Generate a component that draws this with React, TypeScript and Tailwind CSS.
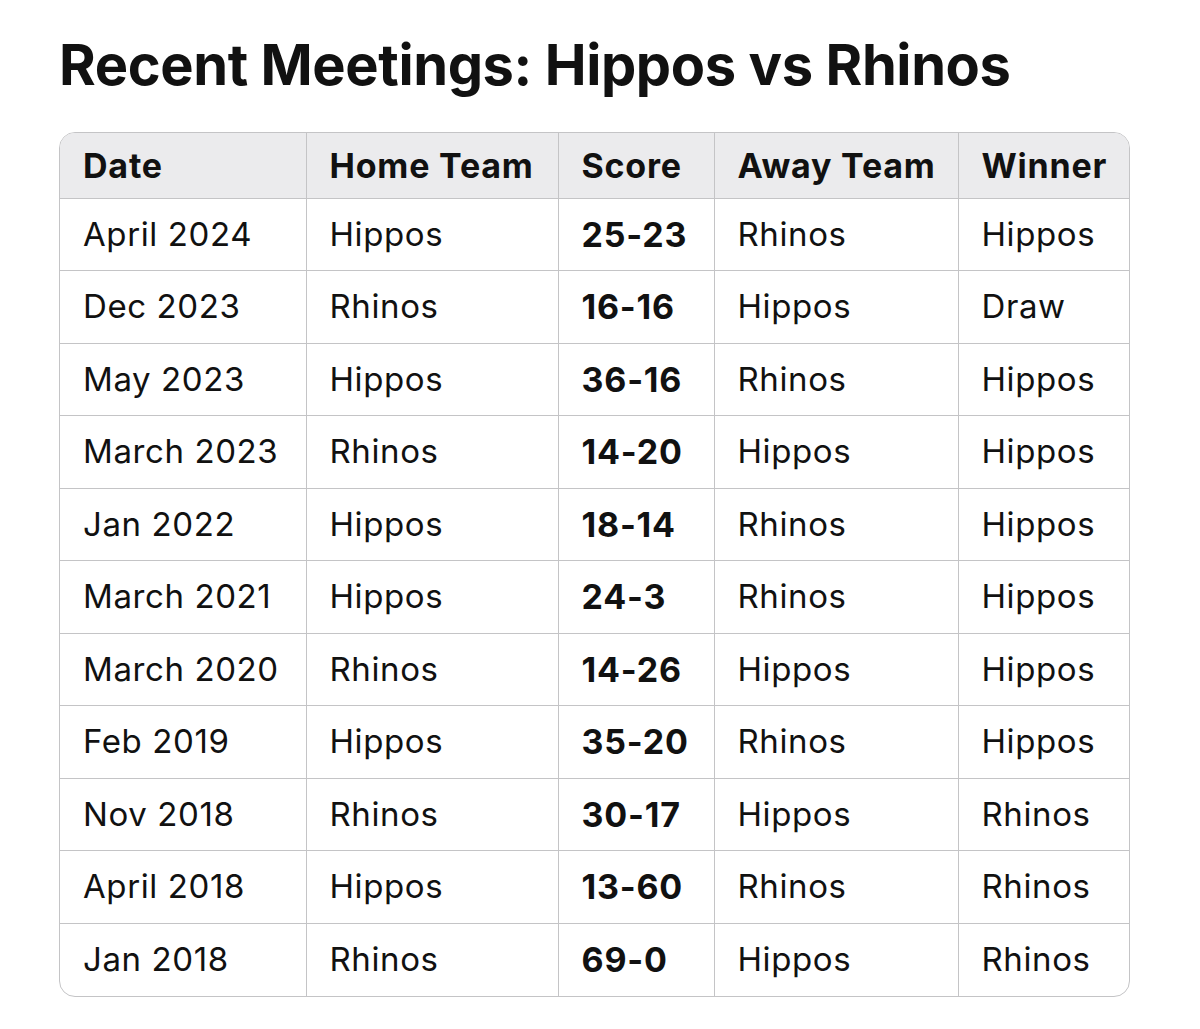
import React from 'react';

const rows = [
  ['April 2024', 'Hippos', '25-23', 'Rhinos', 'Hippos'],
  ['Dec 2023', 'Rhinos', '16-16', 'Hippos', 'Draw'],
  ['May 2023', 'Hippos', '36-16', 'Rhinos', 'Hippos'],
  ['March 2023', 'Rhinos', '14-20', 'Hippos', 'Hippos'],
  ['Jan 2022', 'Hippos', '18-14', 'Rhinos', 'Hippos'],
  ['March 2021', 'Hippos', '24-3', 'Rhinos', 'Hippos'],
  ['March 2020', 'Rhinos', '14-26', 'Hippos', 'Hippos'],
  ['Feb 2019', 'Hippos', '35-20', 'Rhinos', 'Hippos'],
  ['Nov 2018', 'Rhinos', '30-17', 'Hippos', 'Rhinos'],
  ['April 2018', 'Hippos', '13-60', 'Rhinos', 'Rhinos'],
  ['Jan 2018', 'Rhinos', '69-0', 'Hippos', 'Rhinos'],
];

const headers = ['Date', 'Home Team', 'Score', 'Away Team', 'Winner'];
const widths = ['w-[246px]', 'w-[252px]', 'w-[156px]', 'w-[244px]', 'w-[173px]'];

export default function App() {
  return (
    <div className="min-h-[1029px] bg-white pl-[59px] pr-[70px] pt-[35px] text-[#111] font-['Inter',sans-serif]">
      <h1 className="text-[56px] font-bold leading-[60px] tracking-[-0.4px] whitespace-nowrap">
        Recent Meetings: Hippos vs Rhinos
      </h1>

      <div className="mt-[37px] overflow-hidden rounded-[16px] border border-[#c4c4c6]">
        <table className="w-full table-fixed border-collapse">
          <colgroup>
            {widths.map((w, i) => (
              <col key={i} className={w} />
            ))}
          </colgroup>
          <thead>
            <tr className="h-[65px] bg-[#ebebed]">
              {headers.map((h, i) => (
                <th
                  key={h}
                  className={`pl-[23px] pr-0 text-left text-[34px] font-bold tracking-[0.8px] whitespace-nowrap ${i > 0 ? 'border-l border-[#c4c4c6]' : ''}`}
                >
                  {h}
                </th>
              ))}
            </tr>
          </thead>
          <tbody>
            {rows.map((r, ri) => (
              <tr key={ri} className="h-[72.5px] border-t border-[#c4c4c6]">
                {r.map((c, ci) => (
                  <td
                    key={ci}
                    className={`pl-[23px] pr-0 whitespace-nowrap ${ci === 2 ? 'text-[34px] font-bold tracking-[0.8px]' : 'text-[33px] font-normal tracking-[0.6px]'} ${ci > 0 ? 'border-l border-[#c4c4c6]' : ''}`}
                  >
                    {c}
                  </td>
                ))}
              </tr>
            ))}
          </tbody>
        </table>
      </div>
    </div>
  );
}
